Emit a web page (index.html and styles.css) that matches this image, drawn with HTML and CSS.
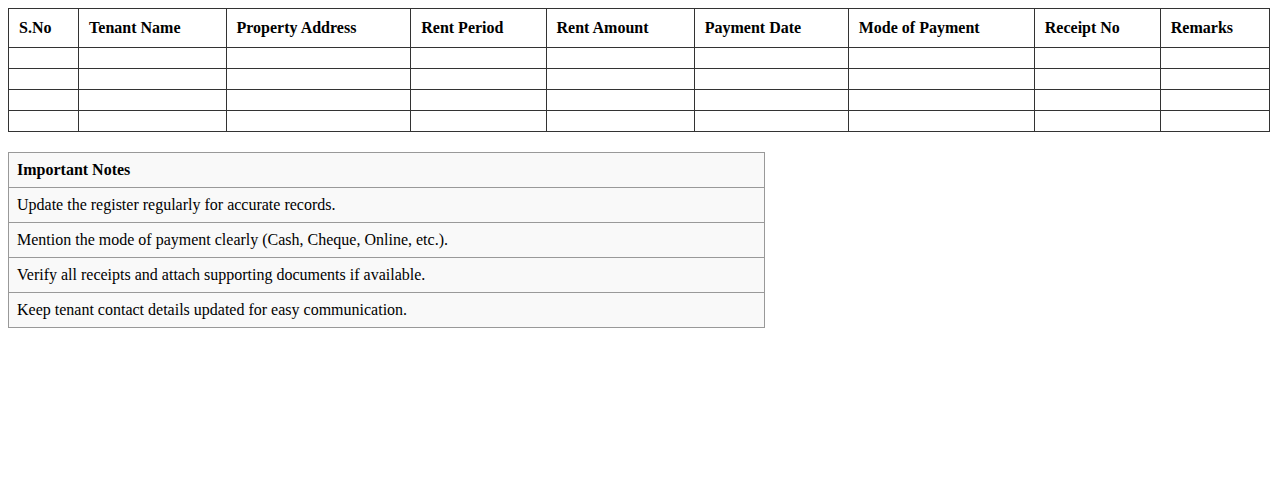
FILE: index.html
```html
<!DOCTYPE html>
<html>
<head>
<meta charset="utf-8">
<link rel="stylesheet" href="styles.css">
</head>
<body>
<table class="register">
  <thead>
    <tr>
      <th>S.No</th>
      <th>Tenant Name</th>
      <th>Property Address</th>
      <th>Rent Period</th>
      <th>Rent Amount</th>
      <th>Payment Date</th>
      <th>Mode of Payment</th>
      <th>Receipt No</th>
      <th>Remarks</th>
    </tr>
  </thead>
  <tbody>
    <tr><td></td><td></td><td></td><td></td><td></td><td></td><td></td><td></td><td></td></tr>
    <tr><td></td><td></td><td></td><td></td><td></td><td></td><td></td><td></td><td></td></tr>
    <tr><td></td><td></td><td></td><td></td><td></td><td></td><td></td><td></td><td></td></tr>
    <tr><td></td><td></td><td></td><td></td><td></td><td></td><td></td><td></td><td></td></tr>
  </tbody>
</table>

<table class="notes">
  <tr><th>Important Notes</th></tr>
  <tr><td>Update the register regularly for accurate records.</td></tr>
  <tr><td>Mention the mode of payment clearly (Cash, Cheque, Online, etc.).</td></tr>
  <tr><td>Verify all receipts and attach supporting documents if available.</td></tr>
  <tr><td>Keep tenant contact details updated for easy communication.</td></tr>
</table>
</body>
</html>
```

FILE: styles.css
```css
body {
  margin: 8px;
  font-family: "Liberation Serif", "Times New Roman", serif;
  color: #000;
  background: #fff;
}

.register {
  width: 100%;
  border-collapse: collapse;
}

.register th,
.register td {
  border: 1px solid #333;
  padding: 10px;
  text-align: left;
  font-size: 16px;
}

.register th {
  font-weight: bold;
}

.notes {
  width: 60%;
  margin-top: 20px;
  border-collapse: collapse;
  background: #f9f9f9;
}

.notes th,
.notes td {
  border: 1px solid #999;
  padding: 8px;
  text-align: left;
  font-size: 16px;
}
```
